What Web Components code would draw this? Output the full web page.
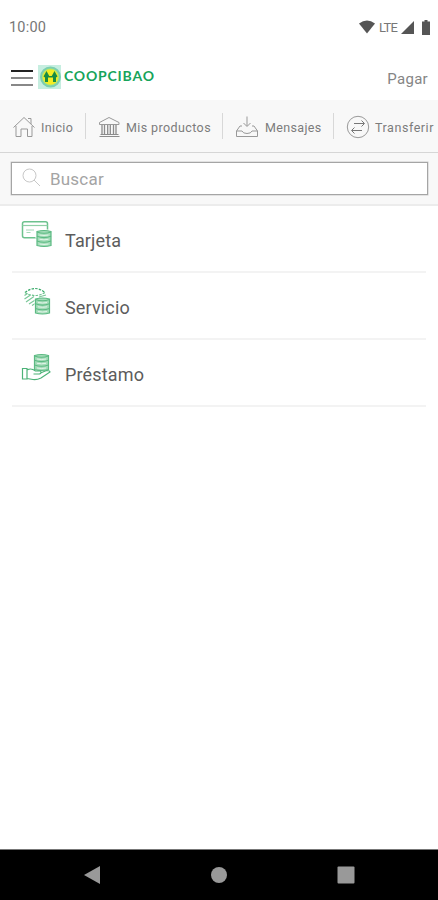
<!DOCTYPE html>
<html lang="es">
<head>
<meta charset="utf-8">
<title>Coopcibao</title>
<style>
body {
    margin: 0;
    background: #fff;
    font-family: Roboto, "Liberation Sans", sans-serif;
}
</style>
</head>
<body>

<c-app>
    <c-statusbar slot="top" time="10:00"></c-statusbar>
    <c-header slot="top" brand="COOPCIBAO">Pagar</c-header>
    <c-tabs slot="top">
        <c-tab icon="home" style="width:85px; --pad:12px; --gap:5px; --ls:0.35px">Inicio</c-tab>
        <c-tab icon="bank" style="width:136px; --pad:11px; --gap:5px; --ls:0.4px">Mis productos</c-tab>
        <c-tab icon="inbox" style="width:110px; --pad:12px; --gap:6px; --ls:0.35px">Mensajes</c-tab>
        <c-tab icon="transfer" style="width:104px; --pad:12px; --gap:5px; --ls:0.55px">Transferir</c-tab>
    </c-tabs>
    <c-search slot="top" placeholder="Buscar"></c-search>
    <c-row icon="card">Tarjeta</c-row>
    <c-row icon="service">Servicio</c-row>
    <c-row icon="loan">Préstamo</c-row>
    <c-navbar slot="bottom"></c-navbar>
</c-app>

<script>

const COINS = `<path fill="#a5dcb9" stroke="#5cba83" d="M16 12.500q7-2 14 0v14q-7 2-14 0z"/>
    <path stroke="#5cba83" d="M16 13q7 2.500 14 0M16 17.300q7 2.500 14 0M16 22q7 2.500 14 0"/>
    <path stroke="#e2f5e9" stroke-width="1" d="M18.500 16q4.500 1 9 0M18.500 20.300q4.500 1 9 0M18.500 25q4.500 1 9 0"/>`;

const ICONS = {
    home: `<path d="M1.500 12.500 12 2.500l10.500 10M4 11v10.500h5v-7.500h6.500v7.500H20V11M16 3.500h3V9"/>`,
    bank: `<path d="M2.500 9.500v-2L12 2.500l10 5v2z"/>
        <path stroke="#8c8c8c" stroke-width="1.300" d="M5 10v9M7.500 10v9M10.700 10v9M13.300 10v9M16.500 10v9M19 10v9"/>
        <path stroke="#8c8c8c" d="M3.500 19.500h18M2.500 21.500h20"/>`,
    inbox: `<path d="M12 1.500v9.500M8.500 8l3.500 3.500L15.500 8M7 11H5l-3.500 5v5.500h21V16L19 11h-2M1.500 16h5.500q1 2.500 5 2.500t5-2.500h5.500"/>`,
    transfer: `<circle cx="12" cy="12" r="10.700"/>
        <path stroke="#777" d="M8 8.500h10M15.500 5.500l3 3-3 3M16 15.500H6M8.500 12.500l-3 3 3 3"/>`,
    card: `<rect x="1.500" y="2.800" width="25" height="16" rx="2" stroke="#6cc28d" stroke-width="1.500"/>
        <path stroke="#8fcfa7" d="M1.500 6.500h25"/>
        <path stroke="#a3d8b7" d="M5 11h8M5.500 13.500h4"/>
        <path fill="#fff" d="M14.500 10.500h13v9h-13z"/>` + COINS,
    service: `<path stroke="#35a866" stroke-dasharray="2.500 1.200" d="M4 6.500Q14-1.500 24 6.500"/>
        <path stroke="#6cc28d" stroke-dasharray="2.500 1.200" d="M4 6.500Q14 12.500 24 6.500"/>
        <path stroke="#7cc89a" d="M3.500 13l6-4M3.500 9.500l3-2M5 16l8-5.500M8 18l7-4.500M11 19.500l4-2.500M18 11l7-2"/>
        <g transform="translate(-1.500 .5)">
            <path fill="#fff" d="M15 12h15v15H15z"/>
            ${COINS}
        </g>`,
    loan: `<g transform="translate(-2.500 -10)">${COINS}</g>
        <path fill="#fff" stroke="#4cb277" d="M1.500 15.500H6v10.500H1.500zM6 17c4-2 6-.8 8.500 1h5q1.500 2-1 3h-6M19.500 20l6-2.500q3.500 0 3.500 1.500l-9 6q-4 2-8 1.500L6 25.500"/>`
};

class AppShell extends HTMLElement {
    constructor() {
        super();
        this.attachShadow({ mode: 'open' });
        this.shadowRoot.innerHTML = `
        <style>
        :host {
            display: flex;
            flex-direction: column;
            width: 438px;
            height: 900px;
            overflow: hidden;
        }
        main {
            flex: 1;
            padding: 0 12px;
        }
        </style>
        <slot name="top"></slot>
        <main><slot></slot></main>
        <slot name="bottom"></slot>
        `;
    }
}
customElements.define('c-app', AppShell);


class StatusBar extends HTMLElement {
    constructor() {
        super();
        this.attachShadow({ mode: 'open' });
        this.shadowRoot.innerHTML = `
        <style>
        :host {
            display: flex;
            align-items: center;
            justify-content: space-between;
            box-sizing: border-box;
            height: 54px;
            padding: 0 8px 0 9px;
            color: #777;
            font-size: 14.500px;
            letter-spacing: 0.200px;
        }
        .right {
            display: flex;
            align-items: center;
            font-size: 13px;
        }
        .lte {
            margin: 0 2px 0 4px;
            width: 20px;
            letter-spacing: -0.800px;
        }
        svg {
            display: block;
            fill: #555;
        }
        .battery {
            margin-left: 8px;
        }
        </style>
        <span>${this.getAttribute('time')}</span>
        <div class="right">
            <svg width="16" height="14" viewBox="0 0 16 14"><path d="M0 3.500Q8-2.500 16 3.500L8 13.500z"/></svg>
            <span class="lte">LTE</span>
            <svg width="13" height="13" viewBox="0 0 13 13"><path d="M13 0v13H0z"/></svg>
            <svg class="battery" width="8" height="15" viewBox="0 0 8 15"><path d="M2.500 0h3v1.500H8V15H0V1.500h2.500z"/></svg>
        </div>
        `;
    }
}
customElements.define('c-statusbar', StatusBar);


class AppHeader extends HTMLElement {
    constructor() {
        super();
        this.attachShadow({ mode: 'open' });
        this.shadowRoot.innerHTML = `
        <style>
        :host {
            display: flex;
            align-items: center;
            box-sizing: border-box;
            height: 46px;
            padding: 0 10px 0 11px;
        }
        .menu {
            display: grid;
            gap: 5px;
            width: 22px;
            margin-top: 2px;
        }
        .menu i {
            height: 2px;
            background: #888;
        }
        .menu i:first-child {
            background: #222;
        }
        .logo {
            margin: 0 3px 0 5px;
        }
        .brand {
            flex: 1;
            margin-top: -3px;
            color: #17a45b;
            font: bold 14px Lato, sans-serif;
            letter-spacing: 0.800px;
        }
        .action {
            margin-top: 4px;
            color: #858585;
            font-size: 15px;
            letter-spacing: 0.300px;
        }
        </style>
        <div class="menu"><i></i><i></i><i></i></div>
        <svg class="logo" width="23" height="24" viewBox="0 0 23 24">
            <path fill="#c6eee0" d="M0 0h23v24H0z"/>
            <circle cx="12.500" cy="12" r="9.500" fill="#b9e66b" stroke="#7ccfb0" stroke-width="2"/>
            <circle cx="12.500" cy="12" r="7.500" fill="#f4ed22"/>
            <path fill="#188c43" d="M8.500 6l3 5.500-1.500 1V17H7v-4.500l-1.500-1zM16.500 6l3 5.500-1.500 1V17h-3v-4.500l-1.500-1zM7.500 11h10v1.500h-10z"/>
        </svg>
        <span class="brand">${this.getAttribute('brand')}</span>
        <span class="action"><slot></slot></span>
        `;
    }
}
customElements.define('c-header', AppHeader);


class TabBar extends HTMLElement {
    constructor() {
        super();
        this.attachShadow({ mode: 'open' });
        this.shadowRoot.innerHTML = `
        <style>
        :host {
            display: flex;
            align-items: center;
            box-sizing: border-box;
            height: 53px;
            background: #f8f8f8;
            border-bottom: 1px solid #d6d6d6;
        }
        ::slotted(:not(:last-child)) {
            border-right: 1px solid #d8d8d8;
        }
        </style>
        <slot></slot>
        `;
    }
}
customElements.define('c-tabs', TabBar);


class TabItem extends HTMLElement {
    constructor() {
        super();
        this.attachShadow({ mode: 'open' });
        this.shadowRoot.innerHTML = `
        <style>
        :host {
            display: flex;
            flex: none;
            align-items: center;
            height: 26px;
            color: #7c7c7c;
            font-size: 12.500px;
            white-space: nowrap;
        }
        svg {
            flex: none;
            margin: 2px var(--gap) 0 var(--pad);
            fill: none;
            stroke: #999;
            stroke-width: 1;
        }
        span {
            margin-top: 2px;
            letter-spacing: var(--ls);
        }
        </style>
        <svg width="24" height="24" viewBox="0 0 24 24">${ICONS[this.getAttribute('icon')]}</svg>
        <span><slot></slot></span>
        `;
    }
}
customElements.define('c-tab', TabItem);


class SearchBox extends HTMLElement {
    constructor() {
        super();
        this.attachShadow({ mode: 'open' });
        this.shadowRoot.innerHTML = `
        <style>
        :host {
            display: block;
            box-sizing: border-box;
            height: 53px;
            padding: 9px 10px 0 11px;
            background: #f8f8f8;
            border-bottom: 2px solid #ececec;
        }
        .box {
            display: flex;
            align-items: center;
            box-sizing: border-box;
            height: 33px;
            padding-left: 10px;
            background: #fff;
            border: 1px solid #a5a5a5;
            box-shadow: 0 0 0 0.500px #ccc;
            color: #a4a4a4;
            font-size: 17px;
            letter-spacing: 0.200px;
        }
        svg {
            margin: -3px 9px 0 0;
            fill: none;
            stroke: #c8c8c8;
        }
        </style>
        <div class="box">
            <svg width="19" height="19" viewBox="0 0 19 19"><circle cx="7.500" cy="7.500" r="6.500"/><path d="M12 12l6 6"/></svg>
            <span>${this.getAttribute('placeholder')}</span>
        </div>
        `;
    }
}
customElements.define('c-search', SearchBox);


class ListRow extends HTMLElement {
    constructor() {
        super();
        this.attachShadow({ mode: 'open' });
        this.shadowRoot.innerHTML = `
        <style>
        :host {
            display: flex;
            align-items: center;
            box-sizing: border-box;
            height: 67px;
            padding-left: 9px;
            border-bottom: 2px solid #f3f3f3;
            color: #5c5c5c;
            font-size: 18px;
            letter-spacing: 0.150px;
        }
        svg {
            margin: 0 12px 9px 0;
            fill: none;
            stroke-width: 1.200;
        }
        span {
            margin-top: 3px;
        }
        </style>
        <svg width="32" height="30" viewBox="0 0 32 30">${ICONS[this.getAttribute('icon')]}</svg>
        <span><slot></slot></span>
        `;
    }
}
customElements.define('c-row', ListRow);


class NavBar extends HTMLElement {
    constructor() {
        super();
        this.attachShadow({ mode: 'open' });
        this.shadowRoot.innerHTML = `
        <style>
        :host {
            display: flex;
            align-items: center;
            justify-content: space-between;
            box-sizing: border-box;
            height: 51px;
            padding: 0 83px;
            background: #000;
            border-top: 1px solid #777;
        }
        svg {
            fill: #999;
        }
        </style>
        <svg width="18" height="18" viewBox="0 0 18 18"><path d="M17 0v18L1 9z"/></svg>
        <svg width="18" height="18" viewBox="0 0 18 18"><circle cx="9" cy="9" r="8"/></svg>
        <svg width="18" height="18" viewBox="0 0 18 18"><rect x=".5" y=".5" width="17" height="17" rx="1"/></svg>
        `;
    }
}
customElements.define('c-navbar', NavBar);

</script>
</body>
</html>
